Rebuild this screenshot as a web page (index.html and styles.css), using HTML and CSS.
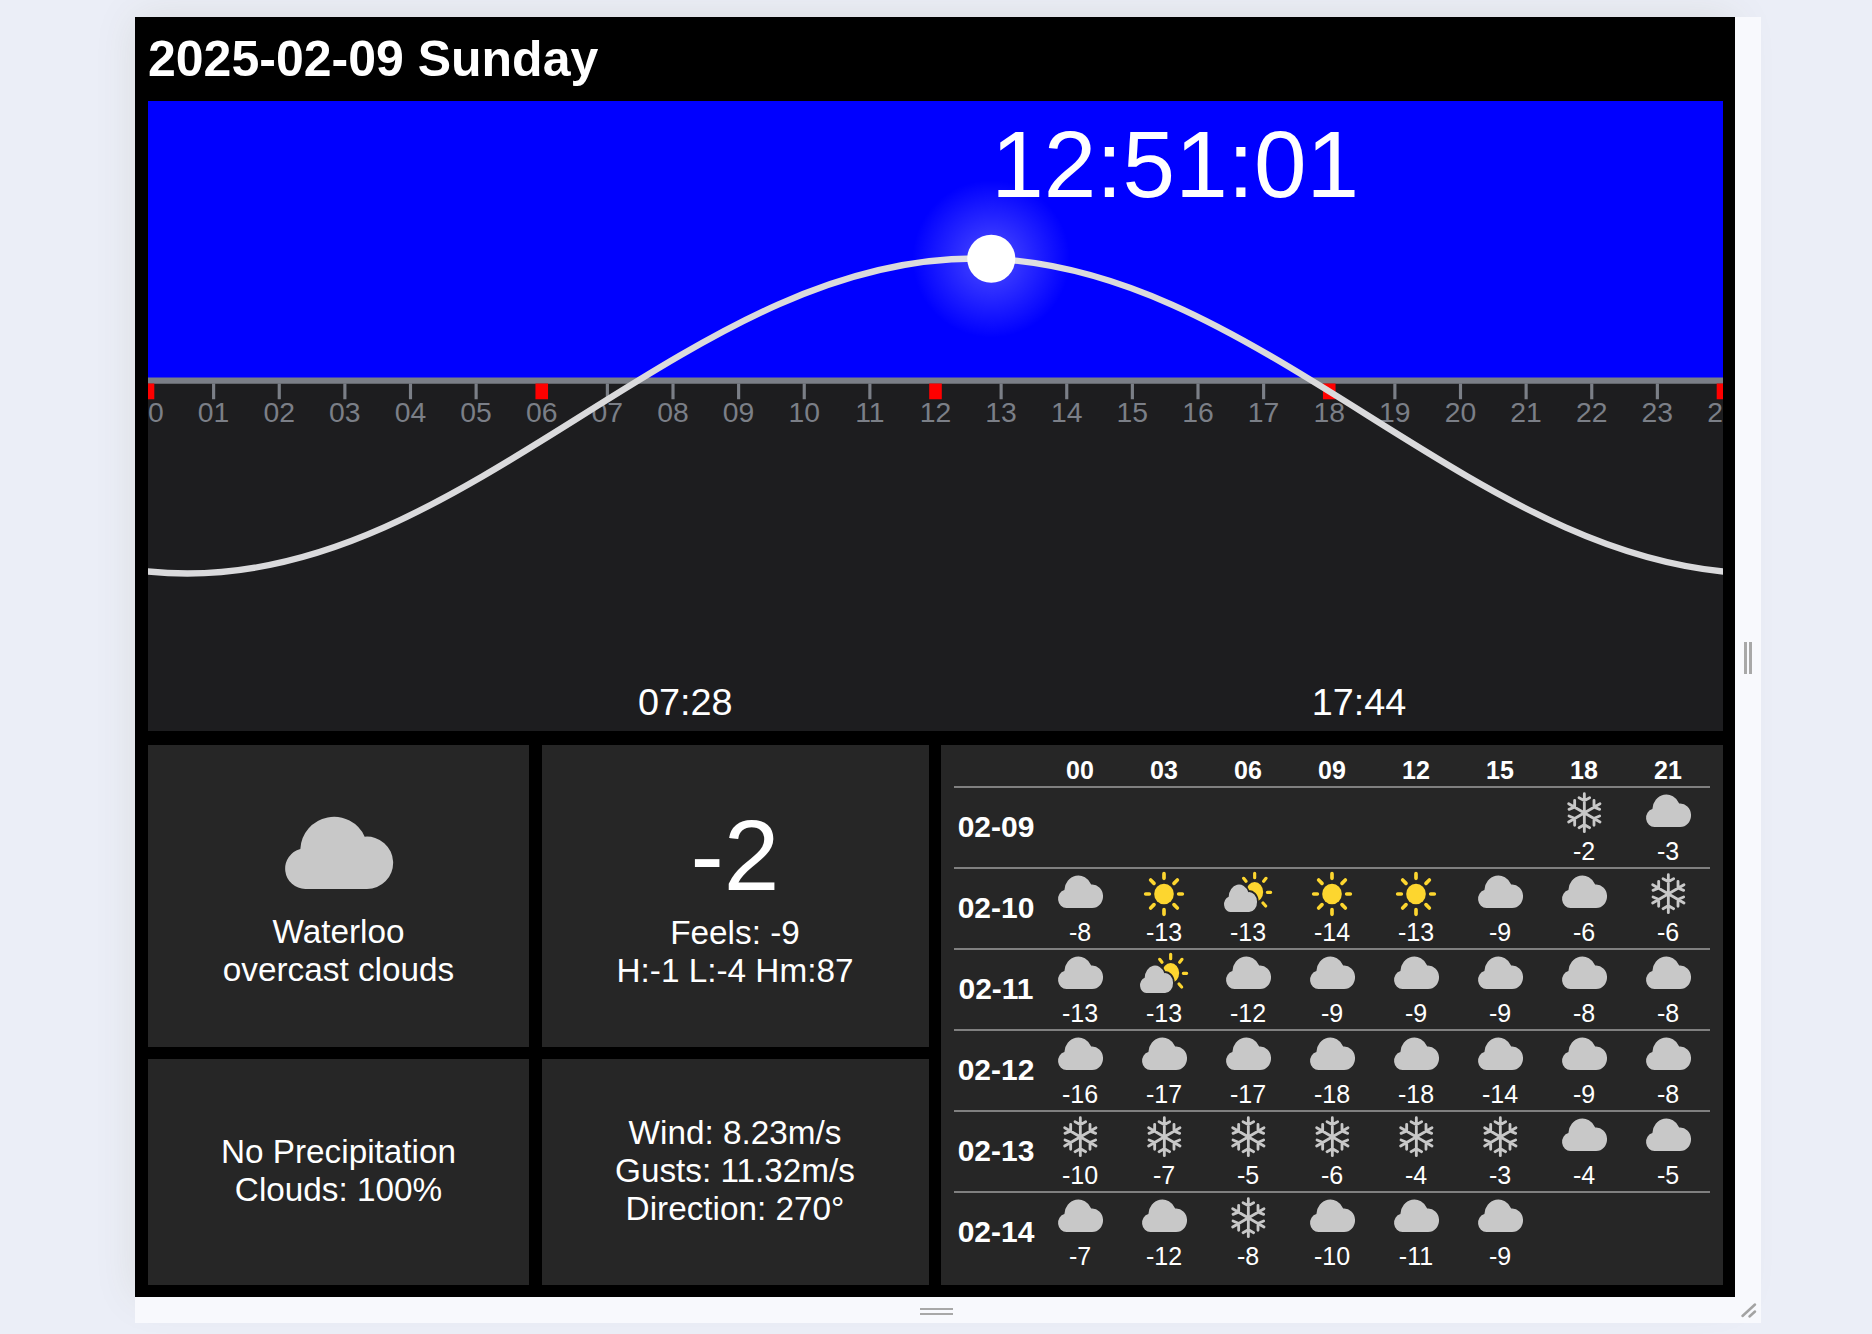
FILE: index.html
```html
<!DOCTYPE html>
<html lang="en">
<head>
<meta charset="utf-8">
<title>Clock and weather</title>
<link rel="stylesheet" href="styles.css">
</head>
<body>
<svg class="defs" aria-hidden="true">
  <defs>
    <path id="cloud-shape" d="M498 446A61 61 0 0 1 483 326A101 101 0 0 1 676 289A78.65 78.65 0 1 1 682 446Z"/>
    <symbol id="cloud" viewBox="0 0 180 150">
      <use href="#cloud-shape" class="grey" transform="translate(24 20) scale(.4167 .449) translate(-437 -230)"/>
    </symbol>
    <symbol id="sun" viewBox="0 0 180 150">
      <ellipse class="yellow" cx="90" cy="75" rx="29.5" ry="31"/>
      <path class="ray" d="M90 14V28M90 122V136M35 75H46M134 75H145M50 33L60 43M130 33L120 43M60 107L50 117M120 107L130 117"/>
    </symbol>
    <symbol id="partly" viewBox="0 0 180 150">
      <ellipse class="yellow" cx="110" cy="69" rx="25.5" ry="30"/>
      <path class="ray thin" d="M110 13V26M77 28L84 37M144 28L137 37M148 70H158M135 102L143 111"/>
      <g transform="translate(18 47) scale(.3056 .38) translate(-437 -230)">
        <use href="#cloud-shape" class="halo"/>
        <use href="#cloud-shape" class="grey"/>
      </g>
    </symbol>
    <symbol id="snow" viewBox="0 0 180 150">
      <path class="flake" d="M91 17V131M44 47L138 102M138 47L44 102M75 29L91 38L107 29M75 119L91 110L107 119M62 37V57L45 64M120 37V57L137 64M62 112V91L45 84M120 112V91L137 84"/>
    </symbol>
  </defs>
</svg>

<div class="stage">
  <main class="screen">
    <h1 class="date">2025-02-09 Sunday</h1>

    <svg class="sky" viewBox="0 0 1500 600">
      <defs>
        <radialGradient id="glow">
          <stop offset="0" stop-color="#fff" stop-opacity=".3"/>
          <stop offset="1" stop-color="#fff" stop-opacity="0"/>
        </radialGradient>
      </defs>
      <rect class="day" width="1500" height="266"/>
      <path class="horizon" d="M0 266.3H1500"/>
      <path class="tick" d="M62.5 269V284M125 269V284M187.5 269V284M250 269V284M312.5 269V284M437.5 269V284M500 269V284M562.5 269V284M625 269V284M687.5 269V284M812.5 269V284M875 269V284M937.5 269V284M1000 269V284M1062.5 269V284M1187.5 269V284M1250 269V284M1312.5 269V284M1375 269V284M1437.5 269V284"/>
      <path class="tick major" d="M0 269V284M375 269V284M750 269V284M1125 269V284M1500 269V284"/>
      <g class="hours">
        <text x="0" y="305.5">00</text><text x="62.5" y="305.5">01</text><text x="125" y="305.5">02</text><text x="187.5" y="305.5">03</text><text x="250" y="305.5">04</text>
        <text x="312.5" y="305.5">05</text><text x="375" y="305.5">06</text><text x="437.5" y="305.5">07</text><text x="500" y="305.5">08</text><text x="562.5" y="305.5">09</text>
        <text x="625" y="305.5">10</text><text x="687.5" y="305.5">11</text><text x="750" y="305.5">12</text><text x="812.5" y="305.5">13</text><text x="875" y="305.5">14</text>
        <text x="937.5" y="305.5">15</text><text x="1000" y="305.5">16</text><text x="1062.5" y="305.5">17</text><text x="1125" y="305.5">18</text><text x="1187.5" y="305.5">19</text>
        <text x="1250" y="305.5">20</text><text x="1312.5" y="305.5">21</text><text x="1375" y="305.5">22</text><text x="1437.5" y="305.5">23</text><text x="1500" y="305.5">24</text>
      </g>
      <path class="curve" d="M-150 406.07C-87.5 433.84 -25 450 37.5 450C100 450 162.5 433.84 225 406.07C287.5 378.3 350 339.27 412.5 300C475 260.73 537.5 221.7 600 193.93C662.5 166.16 725 150 787.5 150C850 150 912.5 166.16 975 193.93C1037.5 221.7 1100 260.73 1162.5 300C1225 339.27 1287.5 378.3 1350 406.07C1412.5 433.84 1475 450 1537.5 450"/>
      <circle cx="803.1" cy="150.3" r="75" fill="url(#glow)"/>
      <circle class="sun" cx="803.1" cy="150.3" r="22.9"/>
      <text class="now" x="803.1" y="91">12:51:01</text>
      <text class="event" x="466.7" y="585">07:28</text>
      <text class="event" x="1108.3" y="585">17:44</text>
    </svg>

    <div class="panels">
      <section class="card">
        <svg class="big-icon" viewBox="0 0 330 327"><use href="#cloud-shape" class="grey" transform="translate(-434 -191)"/></svg>
        <div>Waterloo</div>
        <div>overcast clouds</div>
      </section>
      <section class="card">
        <div class="temp">-2</div>
        <div>Feels: -9</div>
        <div>H:-1 L:-4 Hm:87</div>
      </section>
      <section class="card low">
        <div>No Precipitation</div>
        <div>Clouds: 100%</div>
      </section>
      <section class="card low">
        <div>Wind: 8.23m/s</div>
        <div>Gusts: 11.32m/s</div>
        <div>Direction: 270°</div>
      </section>
      <section class="forecast">
        <div class="row head"><b></b><b>00</b><b>03</b><b>06</b><b>09</b><b>12</b><b>15</b><b>18</b><b>21</b></div>
        <div class="row"><b>02-09</b><span></span><span></span><span></span><span></span><span></span><span></span>
          <span><svg><use href="#snow"/></svg>-2</span><span><svg><use href="#cloud"/></svg>-3</span></div>
        <div class="row"><b>02-10</b>
          <span><svg><use href="#cloud"/></svg>-8</span><span><svg><use href="#sun"/></svg>-13</span><span><svg><use href="#partly"/></svg>-13</span><span><svg><use href="#sun"/></svg>-14</span>
          <span><svg><use href="#sun"/></svg>-13</span><span><svg><use href="#cloud"/></svg>-9</span><span><svg><use href="#cloud"/></svg>-6</span><span><svg><use href="#snow"/></svg>-6</span></div>
        <div class="row"><b>02-11</b>
          <span><svg><use href="#cloud"/></svg>-13</span><span><svg><use href="#partly"/></svg>-13</span><span><svg><use href="#cloud"/></svg>-12</span><span><svg><use href="#cloud"/></svg>-9</span>
          <span><svg><use href="#cloud"/></svg>-9</span><span><svg><use href="#cloud"/></svg>-9</span><span><svg><use href="#cloud"/></svg>-8</span><span><svg><use href="#cloud"/></svg>-8</span></div>
        <div class="row"><b>02-12</b>
          <span><svg><use href="#cloud"/></svg>-16</span><span><svg><use href="#cloud"/></svg>-17</span><span><svg><use href="#cloud"/></svg>-17</span><span><svg><use href="#cloud"/></svg>-18</span>
          <span><svg><use href="#cloud"/></svg>-18</span><span><svg><use href="#cloud"/></svg>-14</span><span><svg><use href="#cloud"/></svg>-9</span><span><svg><use href="#cloud"/></svg>-8</span></div>
        <div class="row"><b>02-13</b>
          <span><svg><use href="#snow"/></svg>-10</span><span><svg><use href="#snow"/></svg>-7</span><span><svg><use href="#snow"/></svg>-5</span><span><svg><use href="#snow"/></svg>-6</span>
          <span><svg><use href="#snow"/></svg>-4</span><span><svg><use href="#snow"/></svg>-3</span><span><svg><use href="#cloud"/></svg>-4</span><span><svg><use href="#cloud"/></svg>-5</span></div>
        <div class="row"><b>02-14</b>
          <span><svg><use href="#cloud"/></svg>-7</span><span><svg><use href="#cloud"/></svg>-12</span><span><svg><use href="#snow"/></svg>-8</span><span><svg><use href="#cloud"/></svg>-10</span>
          <span><svg><use href="#cloud"/></svg>-11</span><span><svg><use href="#cloud"/></svg>-9</span><span></span><span></span></div>
      </section>
    </div>
  </main>
  <div class="grip side"><i></i><i></i></div>
  <div class="grip bottom"><i></i><i></i></div>
  <div class="grip corner"><svg width="26" height="26"><path d="M7.5 19L20 7.5M14.5 19.5L20 14.5"/></svg></div>
</div>
</body>
</html>
```
FILE: styles.css
```css
* { box-sizing: border-box; }

body {
  margin: 0;
  height: 1334px;
  padding: 17px 0 0 135px;
  overflow: hidden;
  background: #ebeef7;
  color: #fff;
  font-family: "Liberation Sans", Arial, sans-serif;
}

.defs { display: none; }

.stage {
  display: grid;
  grid-template-columns: 1600px 26px;
  grid-template-rows: 1280px 26px;
}

.screen {
  display: flex;
  flex-direction: column;
  padding: 0 12px 12px 13px;
  background: #000;
  box-shadow: 0 0 40px rgba(90, 80, 20, .1);
}

.date {
  margin: 0;
  height: 84px;
  font-size: 50px;
  line-height: 85px;
}

.sky {
  display: block;
  width: 1575px;
  height: 630px;
  margin-bottom: 14px;
  background: #1d1d1f;
}
.day { fill: #00f; }
.horizon { fill: none; stroke: #7b7f87; stroke-width: 6; }
.tick { stroke: #7b7f87; stroke-width: 3; }
.tick.major { stroke: #f00; stroke-width: 12; }
.hours { fill: #7b7f87; font-size: 27px; text-anchor: middle; }
.curve { fill: none; stroke: #dadadc; stroke-width: 6; }
.sun { fill: #fff; }
.now { fill: #fff; font-size: 90px; }
.event { fill: #fff; font-size: 36px; }

.panels {
  display: grid;
  grid-template-columns: 381px 387px 782px;
  grid-template-rows: 302px 226px;
  column-gap: 12.5px;
  row-gap: 12px;
}

.card {
  display: flex;
  flex-direction: column;
  align-items: center;
  justify-content: center;
  background: #262626;
  font-size: 33.3px;
  line-height: 38px;
}
.card.low { padding-bottom: 2px; }
.big-icon { width: 110px; height: 109px; }
.temp { height: 111px; font-size: 100px; line-height: 105px; }

.forecast {
  grid-column: 3;
  grid-row: 1 / 3;
  padding: 10px 13px 0;
  background: #262626;
}
.row {
  display: grid;
  grid-template-columns: repeat(9, 84px);
  height: 81px;
  border-top: 2px solid #808080;
  text-align: center;
  font-size: 25px;
  line-height: 26px;
}
.row b { font-size: 30px; line-height: 77px; }
.row svg { display: block; width: 60px; height: 50px; margin: 0 auto; }
.head { height: 31px; border: 0; }
.head b { font-size: 25px; line-height: 31px; }

.grey { fill: #c8c8c8; }
.yellow { fill: #fdd62f; }
.ray { fill: none; stroke: #fdd62f; stroke-width: 11; stroke-linecap: round; }
.ray.thin { stroke-width: 9.5; }
.halo { fill: #262626; stroke: #262626; stroke-width: 34; }
.flake { fill: none; stroke: #c8c8c8; stroke-width: 8.5; stroke-linecap: round; }

.grip {
  display: flex;
  align-items: center;
  justify-content: center;
  gap: 2px;
  background: #f8f9fd;
  z-index: 1;
}
.grip i { background: #a8a8a8; }
.side { padding: 2px 0 0; }
.side i { width: 3px; height: 32px; }
.bottom { flex-direction: column; gap: 3px; padding: 2px 0 0 3px; }
.bottom i { width: 33px; height: 2px; }
.corner path { fill: none; stroke: #a3a3a3; stroke-width: 2.5; stroke-linecap: round; }
```
